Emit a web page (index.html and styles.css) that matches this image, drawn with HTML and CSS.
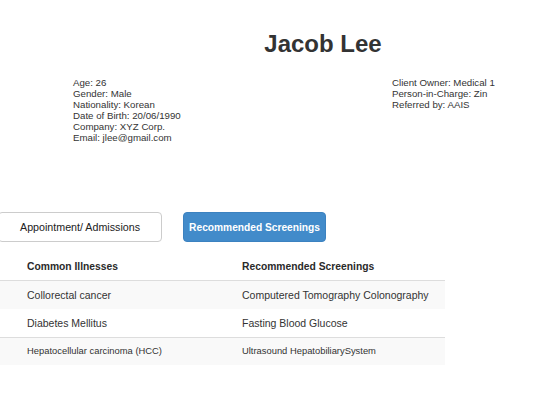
FILE: index.html
```html
<!DOCTYPE html>
<html>
<head>
<meta charset="utf-8">
<link rel="stylesheet" href="styles.css">
</head>
<body>
<div class="page">
  <h1 class="name">Jacob Lee</h1>
  <div class="info">
    <div class="info-col left">
      <div>Age: 26</div>
      <div>Gender: Male</div>
      <div>Nationality: Korean</div>
      <div>Date of Birth: 20/06/1990</div>
      <div>Company: XYZ Corp.</div>
      <div>Email: jlee@gmail.com</div>
    </div>
    <div class="info-col right">
      <div>Client Owner: Medical 1</div>
      <div>Person-in-Charge: Zin</div>
      <div>Referred by: AAIS</div>
    </div>
  </div>
  <div class="tabs">
    <button class="btn btn-default">Appointment/ Admissions</button>
    <button class="btn btn-primary">Recommended Screenings</button>
  </div>
  <table class="screen-table">
    <thead>
      <tr><th class="c1">Common Illnesses</th><th>Recommended Screenings</th></tr>
    </thead>
    <tbody>
      <tr class="striped"><td class="c1">Collorectal cancer</td><td>Computered Tomography Colonography</td></tr>
      <tr><td class="c1">Diabetes Mellitus</td><td>Fasting Blood Glucose</td></tr>
      <tr class="striped small"><td class="c1">Hepatocellular carcinoma (HCC)</td><td>Ultrasound HepatobiliarySystem</td></tr>
    </tbody>
  </table>
</div>
</body>
</html>
```
FILE: styles.css
```css
html, body {
  margin: 0;
  padding: 0;
  background: #fff;
}
body {
  font-family: "Liberation Sans", Arial, sans-serif;
  color: #333;
}
.page {
  width: 557px;
  overflow: hidden;
}
.name {
  margin: 31px 0 0 89px;
  font-size: 24px;
  line-height: 26px;
  font-weight: bold;
  text-align: center;
  color: #333;
}
.info {
  display: flex;
  margin-top: 20px;
  padding-left: 73px;
  font-size: 9.7px;
  line-height: 11px;
}
.info-col.left {
  flex: 0 0 319px;
}
.info-col.right {
  flex: 1 1 auto;
}
.tabs {
  display: flex;
  gap: 21px;
  margin: 69px 0 0 -2px;
}
.btn {
  height: 30px;
  border-radius: 4px;
  font-family: "Liberation Sans", Arial, sans-serif;
  font-size: 10.7px;
  padding: 0;
  margin: 0;
  cursor: pointer;
}
.btn-default {
  width: 164px;
  background: #fff;
  border: 1px solid #ccc;
  color: #222;
}
.btn-primary {
  width: 143px;
  background: #428bca;
  border: 1px solid #3c82c0;
  color: #fff;
  font-weight: 600;
  font-size: 10.2px;
}
.screen-table {
  margin-top: 10px;
  width: 445px;
  border-collapse: collapse;
  font-size: 10.5px;
}
.screen-table th, .screen-table td {
  height: 28px;
  padding: 0;
  text-align: left;
  vertical-align: middle;
}
.screen-table th {
  font-weight: bold;
  font-size: 10.3px;
  color: #2a2a2a;
  border-bottom: 1px solid #ddd;
}
.screen-table .c1 {
  width: 215px;
  padding-left: 27px;
}
.screen-table tr.striped td {
  background: #f9f9f9;
}
.screen-table tr.small td {
  font-size: 9.4px;
  height: 25px;
  padding-bottom: 2px;
  border-top: 1px solid #ddd;
}
```
